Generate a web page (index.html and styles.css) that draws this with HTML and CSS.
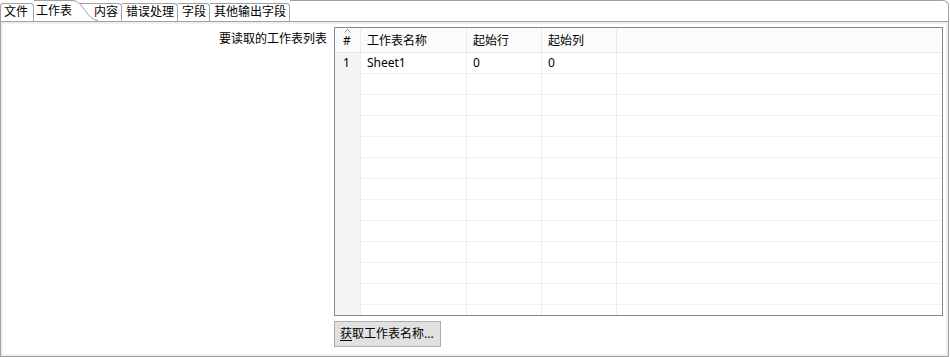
FILE: index.html
```html
<!DOCTYPE html>
<html lang="zh">

<head>
    <meta charset="UTF-8">
    <title>工作表</title>
    <link rel="stylesheet" href="styles.css">
</head>

<body>
    <div class="folder">
        <div class="tabbar">
            <div class="tab first">文件</div>
            <div class="tab current">工作表
                <svg class="curve" width="26" height="21" viewBox="0 0 26 21">
                    <path d="M0 0 C10 0 14 20 25 20 L25 21 L0 21 Z" fill="#fff"/>
                    <path d="M0 0.5 C10 0.5 14 20.5 25 20.5" fill="none" stroke="#a0a0a0"/>
                </svg>
            </div>
            <div class="tab after">内容</div>
            <div class="tab">错误处理</div>
            <div class="tab">字段</div>
            <div class="tab">其他输出字段</div>
            <div class="filler"></div>
        </div>
        <div class="panel">
            <div class="panel-body">
                <div class="label">要读取的工作表列表</div>
                <div class="grid">
                    <div class="row head">
                        <div class="cell idx">
                            <svg class="sort" width="7" height="4" viewBox="0 0 7 4">
                                <path d="M0.5 3.5 L3.5 0.5 L6.5 3.5" fill="none" stroke="#7d93b2"/>
                            </svg>#
                        </div>
                        <div class="cell">工作表名称</div>
                        <div class="cell">起始行</div>
                        <div class="cell">起始列</div>
                        <div class="cell"></div>
                    </div>
                    <div class="row">
                        <div class="cell idx">1</div>
                        <div class="cell">Sheet1</div>
                        <div class="cell">0</div>
                        <div class="cell">0</div>
                        <div class="cell"></div>
                    </div>
                    <div class="row"><div class="cell idx"></div><div class="cell"></div><div class="cell"></div><div class="cell"></div><div class="cell"></div></div>
                    <div class="row"><div class="cell idx"></div><div class="cell"></div><div class="cell"></div><div class="cell"></div><div class="cell"></div></div>
                    <div class="row"><div class="cell idx"></div><div class="cell"></div><div class="cell"></div><div class="cell"></div><div class="cell"></div></div>
                    <div class="row"><div class="cell idx"></div><div class="cell"></div><div class="cell"></div><div class="cell"></div><div class="cell"></div></div>
                    <div class="row"><div class="cell idx"></div><div class="cell"></div><div class="cell"></div><div class="cell"></div><div class="cell"></div></div>
                    <div class="row"><div class="cell idx"></div><div class="cell"></div><div class="cell"></div><div class="cell"></div><div class="cell"></div></div>
                    <div class="row"><div class="cell idx"></div><div class="cell"></div><div class="cell"></div><div class="cell"></div><div class="cell"></div></div>
                    <div class="row"><div class="cell idx"></div><div class="cell"></div><div class="cell"></div><div class="cell"></div><div class="cell"></div></div>
                    <div class="row"><div class="cell idx"></div><div class="cell"></div><div class="cell"></div><div class="cell"></div><div class="cell"></div></div>
                    <div class="row"><div class="cell idx"></div><div class="cell"></div><div class="cell"></div><div class="cell"></div><div class="cell"></div></div>
                    <div class="row"><div class="cell idx"></div><div class="cell"></div><div class="cell"></div><div class="cell"></div><div class="cell"></div></div>
                    <div class="row"><div class="cell idx"></div><div class="cell"></div><div class="cell"></div><div class="cell"></div><div class="cell"></div></div>
                </div>
                <div class="actions">
                    <button class="btn"><u>获</u>取工作表名称...</button>
                </div>
            </div>
        </div>
    </div>
</body>

</html>
```

FILE: styles.css
```css
* {
    padding: 0;
    margin: 0;
    box-sizing: border-box;
}

body {
    background-color: #fff;
    font-family: "Noto Sans", "Noto Sans CJK SC", sans-serif;
    font-size: 12px;
    color: #000;
}

.folder {
    width: 949px;
    height: 357px;
}

/* tabs */
.tabbar {
    display: flex;
    align-items: flex-end;
    height: 21px;
}

.tab {
    height: 18px;
    padding: 0 3px 0 4px;
    line-height: 16px;
    border-top: 1px solid #a0a0a0;
    border-right: 1px solid #a0a0a0;
    border-top-right-radius: 4px;
    white-space: nowrap;
}

.tab.first {
    padding: 0 5px 0 3px;
    border-left: 1px solid #a0a0a0;
    border-top-left-radius: 3px;
}

.tab.current {
    position: relative;
    z-index: 1;
    height: 21px;
    padding: 2px 3px 0 2px;
    border-right: none;
    border-top-right-radius: 0;
    background-color: #fff;
}

.tab.current .curve {
    position: absolute;
    left: 100%;
    top: -1px;
    margin-left: -2px;
}

.tab.after {
    padding-left: 19px;
}

.filler {
    flex: 1;
    height: 21px;
    border-top: 1px solid #a0a0a0;
    border-right: 1px solid #a0a0a0;
    border-top-right-radius: 6px;
}

/* body */
.panel {
    height: 336px;
    border: 1px solid #a0a0a0;
}

.panel-body {
    height: 100%;
    border: 2px solid #f0f0f0;
    padding: 3px 3px 0 0;
    display: grid;
    grid-template-columns: 324px 1fr;
    grid-template-rows: 289px auto;
    column-gap: 7px;
    row-gap: 5px;
}

.label {
    padding-top: 4px;
    line-height: 16px;
    text-align: right;
}

.grid {
    height: 289px;
    border: 1px solid #828790;
    overflow: hidden;
}

.row {
    display: grid;
    grid-template-columns: 26px 106px 75px 75px 1fr;
    height: 21px;
    border-bottom: 1px solid #f0f0f0;
}

.row.head {
    height: 25px;
    background-color: #fbfbfb;
    border-bottom-color: #e3ebf6;
}

.cell {
    padding-left: 6px;
    line-height: 20px;
    border-right: 1px solid #e6edf7;
    white-space: nowrap;
}

.head .cell {
    padding-top: 1px;
    line-height: 23px;
}

.cell:last-child {
    border-right: none;
}

.cell.idx {
    position: relative;
    padding-left: 8px;
}

.row:not(.head) .cell.idx {
    background-color: #f5f5f5;
}

.sort {
    position: absolute;
    left: 9px;
    top: 1px;
    display: block;
}

.actions {
    grid-column: 2;
}

.btn {
    height: 26px;
    padding: 0 6px 0 5px;
    font-family: "Noto Sans", "Noto Sans CJK SC", sans-serif;
    font-size: 12px;
    line-height: 24px;
    color: #000;
    background-color: #e1e1e1;
    border: 1px solid #adadad;
}

.btn u {
    text-underline-offset: 2px;
}
```
